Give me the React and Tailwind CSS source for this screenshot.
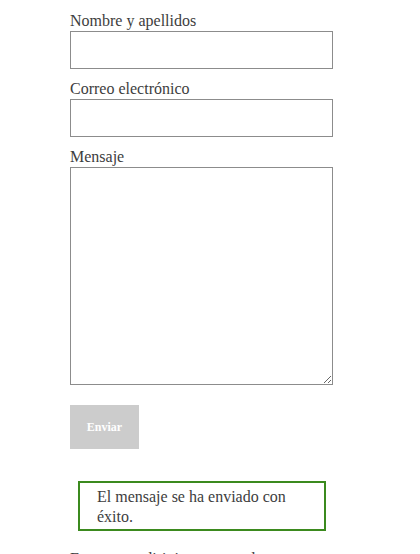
import React from 'react';

const serif = { fontFamily: '"Liberation Serif", "DejaVu Serif", serif' };

const Field = ({ label, children, className = '' }) => (
  <div className={className}>
    <label className="block text-[16px] leading-[20px] text-[#3d3d3d]">{label}</label>
    {children}
  </div>
);

const App = () => {
  return (
    <div className="w-[420px] h-[554px] overflow-hidden bg-white" style={serif}>
      <form className="pt-[11px] pl-[70px] w-[333px]" onSubmit={(e) => e.preventDefault()}>
        <Field label="Nombre y apellidos">
          <input
            type="text"
            className="block w-[263px] h-[38px] border border-[#8c8c8c] bg-white outline-none px-2"
          />
        </Field>
        <Field label="Correo electrónico" className="mt-[10px]">
          <input
            type="email"
            className="block w-[263px] h-[38px] border border-[#8c8c8c] bg-white outline-none px-2"
          />
        </Field>
        <Field label="Mensaje" className="mt-[10px]">
          <textarea className="block w-[263px] h-[218px] border border-[#8c8c8c] bg-white outline-none p-2" />
        </Field>
        <button
          type="submit"
          className="mt-[20px] block w-[69px] h-[44px] bg-[#cccccc] text-white text-[12px] font-bold"
        >
          Enviar
        </button>
      </form>
      <div className="ml-[78px] mt-[32px] w-[248px] border-2 border-[#3b8a1e] pt-[4px] pb-[2px] px-[17px] text-[16px] leading-[20px] text-[#3d3d3d]">
        El mensaje se ha enviado con éxito.
      </div>
      <p className="ml-[70px] mt-[18px] w-[290px] text-[16px] leading-[20px] text-[#3d3d3d] whitespace-nowrap">
        Esperamos dirigirnos a usted pronto con su respuesta
      </p>
    </div>
  );
};

export default App;
